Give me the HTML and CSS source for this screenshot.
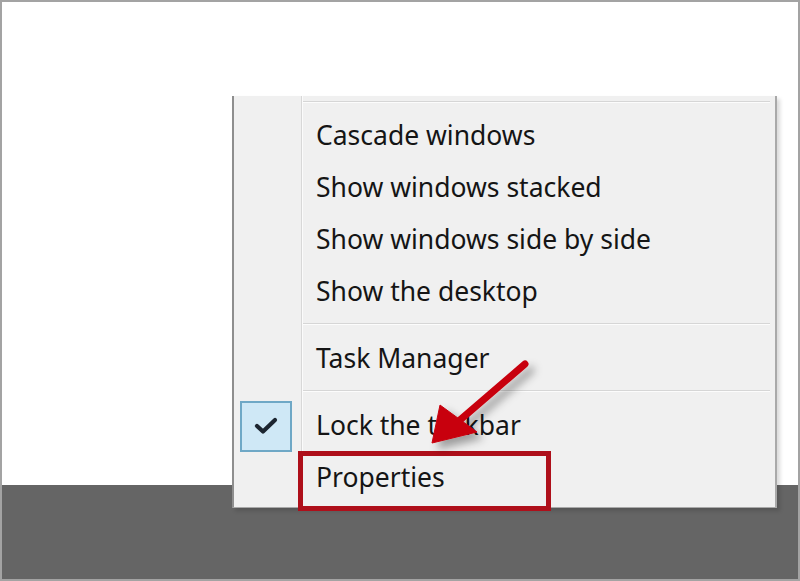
FILE: index.html
```html
<!DOCTYPE html>
<html lang="en">
<head>
    <meta charset="UTF-8">
    <meta name="viewport" content="width=device-width, initial-scale=1.0">
    <title>Taskbar context menu</title>
    <link rel="stylesheet" href="styles.css">
</head>
<body>
    <div class="screen">
        <div class="desktop"></div>
        <div class="taskbar"></div>

        <div class="menu">
            <div class="sep sep-top"></div>
            <div class="item"><span class="icon"></span><span class="label">Cascade windows</span></div>
            <div class="item"><span class="icon"></span><span class="label">Show windows stacked</span></div>
            <div class="item"><span class="icon"></span><span class="label">Show windows side by side</span></div>
            <div class="item"><span class="icon"></span><span class="label">Show the desktop</span></div>
            <div class="sep"></div>
            <div class="item"><span class="icon"></span><span class="label">Task Manager</span></div>
            <div class="sep"></div>
            <div class="item">
                <span class="icon">
                    <span class="check">
                        <svg width="24" height="18" viewBox="0 0 24 18">
                            <polyline points="3,9 9,14.5 21,3" fill="none" stroke="#1c2530" stroke-width="4.2" stroke-linecap="round" stroke-linejoin="round"/>
                        </svg>
                    </span>
                </span>
                <span class="label">Lock the taskbar</span>
            </div>
            <div class="item"><span class="icon"></span><span class="label">Properties</span></div>
        </div>

        <div class="highlight"></div>

        <svg class="arrow" viewBox="2 2 796 577" width="796" height="577">
            <defs>
                <filter id="shade" x="-20%" y="-20%" width="140%" height="140%">
                    <feDropShadow dx="6" dy="6" stdDeviation="4" flood-color="#000" flood-opacity="0.35"/>
                </filter>
            </defs>
            <g filter="url(#shade)" fill="#c8000f" stroke="#c8000f">
                <line x1="525" y1="364" x2="460" y2="420" stroke-width="7" stroke-linecap="round"/>
                <polygon points="432,443 440,405 477,432" stroke-width="1" stroke-linejoin="round"/>
            </g>
        </svg>
    </div>
</body>
</html>
```

FILE: styles.css
```css
* {
    box-sizing: border-box;
}
body {
    margin: 0;
    font-family: 'Noto Sans', 'Open Sans', sans-serif;
}
.screen {
    position: relative;
    width: 800px;
    height: 581px;
    border: 2px solid #a3a3a3;
    background: #fff;
    display: flex;
    flex-direction: column;
    overflow: hidden;
}
.desktop {
    flex: 1;
    background: #fff;
}
.taskbar {
    height: 94px;
    background: #656565;
}
.menu {
    position: absolute;
    left: 230px;
    top: 94px;
    width: 545px;
    height: 412px;
    border-left: 2px solid #8e8e8e;
    border-right: 2px solid #a9a9a9;
    border-bottom: 1px solid #a9a9a9;
    background: linear-gradient(to right, #f0f0f0 67px, #d8d8d8 67px, #d8d8d8 68px, #fbfbfb 68px, #fbfbfb 69px, #f0f0f0 69px);
    box-shadow: 3px 3px 4px rgba(0, 0, 0, 0.15);
    padding-bottom: 5px;
}
.sep {
    margin: 6px 5px 7px 69px;
    height: 2px;
    border-top: 1px solid #d6d6d6;
    border-bottom: 1px solid #fcfcfc;
}
.sep-top {
    margin-top: 5px;
    margin-bottom: 6px;
}
.item {
    display: flex;
    height: 52px;
    align-items: center;
}
.icon {
    width: 69px;
    height: 52px;
    display: flex;
    align-items: center;
    justify-content: center;
}
.check {
    width: 52px;
    height: 51px;
    margin: 2px 5px 0 0;
    background: #cfe8f6;
    border: 2px solid #6fa8c6;
    display: flex;
    align-items: center;
    justify-content: center;
}
.label {
    padding-left: 13px;
    font-size: 26.5px;
    color: #151515;
    white-space: nowrap;
}
.highlight {
    position: absolute;
    left: 296px;
    top: 449px;
    width: 253px;
    height: 60px;
    border: 5px solid #ae0f1a;
}
.arrow {
    position: absolute;
    left: 0;
    top: 0;
    pointer-events: none;
}
```
